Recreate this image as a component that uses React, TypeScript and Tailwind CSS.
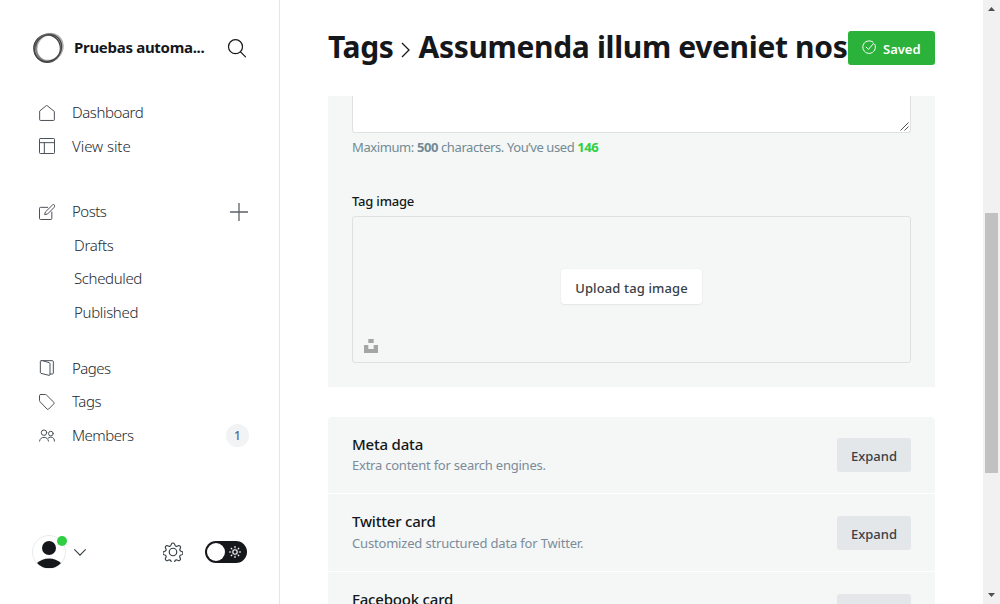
import type { ReactNode } from "react";

function Icon({ size = 16, box = 24, children }: { size?: number; box?: number; children: ReactNode }) {
  return (
    <svg width={size} height={size} viewBox={`0 0 ${box} ${box}`} fill="none" stroke="currentColor" strokeWidth="1.5" strokeLinecap="round" strokeLinejoin="round" className="shrink-0">
      {children}
    </svg>
  );
}

const home = <Icon><path d="M1 9.7V22a1.2 1.2 0 0 0 1.2 1.2h19.6A1.2 1.2 0 0 0 23 22V9.7L12 .8z" /></Icon>;
const layout = <Icon><rect x=".75" y=".75" width="22.5" height="22.5" rx="1.2" /><path d="M.75 7h22.5M8 7v16" /></Icon>;
const pencil = <Icon><path d="M13 5H2.200A1.500 1.500 0 0 0 .75 6.500v15.250a1.500 1.500 0 0 0 1.500 1.500h15.500a1.500 1.500 0 0 0 1.500-1.500V12M12.500 15l-4 1 1-4L20.200 1.500a2.100 2.100 0 0 1 3 3z" /></Icon>;
const pages = <Icon><path d="M5.500 1H20a1.500 1.500 0 0 1 1.500 1.500v17A1.500 1.500 0 0 1 20 21h-3.500M3.300 1h2.200l9.800 3c.7.200 1.200.800 1.200 1.500v16.300c0 .9-.7 1.500-1.500 1.200L3 20c-.7-.200-1-.800-1-1.500v-16C2 1.700 2.500 1 3.300 1z" /></Icon>;
const tag = <Icon><path d="M2.250.75h7.400a2 2 0 0 1 1.400.6l11.300 11.200a1.500 1.500 0 0 1 0 2.100l-8.100 8.100a1.500 1.500 0 0 1-2.100 0L1.350 11.300a2 2 0 0 1-.6-1.400V2.250a1.500 1.500 0 0 1 1.500-1.500z" /></Icon>;
const members = <Icon><path d="M11.600 8.500a4.100 4.100 0 1 1-8.200 0 4.100 4.100 0 0 1 8.200 0zM21.300 9.900a3.500 3.500 0 1 1-7 0 3.500 3.500 0 0 1 7 0zM.8 21.200a6.800 6.800 0 0 1 13.400 0M13.800 16.500a5.700 5.700 0 0 1 9.500 4.700" /></Icon>;

function NavItem({ icon, label, className, extra }: { icon: ReactNode; label: string; className: string; extra?: ReactNode }) {
  return (
    <a className="flex h-[33.5px] items-center">
      <span className="flex w-[33px] items-center pt-px text-[#4b5158]">{icon}</span>
      <span className={className}>{label}</span>
      {extra && <span className="ml-auto">{extra}</span>}
    </a>
  );
}

function Logo() {
  return (
    <svg width="32" height="32" viewBox="0 0 32 32" fill="none" className="shrink-0">
      <ellipse cx="16.800" cy="14.800" rx="12.600" ry="14" stroke="#b0b0b0" strokeWidth="2.400" transform="rotate(38 16 16)" />
      <ellipse cx="15.200" cy="16.500" rx="13.300" ry="13.700" stroke="#444" strokeWidth="1.500" />
      <ellipse cx="16.500" cy="15.500" rx="12.600" ry="13.700" stroke="#777" strokeWidth="1.300" transform="rotate(12 16 16)" />
      <ellipse cx="16" cy="16.200" rx="14.200" ry="12.600" stroke="#444" strokeWidth="1.100" transform="rotate(-42 16 16)" />
    </svg>
  );
}

function Sidebar() {
  return (
    <nav className="flex w-[280px] shrink-0 flex-col border-r border-[#e3e6e8] pt-8 text-[15px] font-light text-[#23292f]">
      <div className="flex h-8 items-center pr-[33px] pl-8">
        <Logo />
        <span className="-mt-0.5 ml-[10px] text-[15px] font-bold tracking-[-0.3px] whitespace-nowrap text-[#15171a]">Pruebas automa...</span>
        <svg width="19" height="19" viewBox="0 0 19 19" fill="none" stroke="#15171a" strokeWidth="1.200" strokeLinecap="round" className="ml-auto shrink-0"><circle cx="8.500" cy="7.700" r="7" /><path d="m13.500 12.800 5 5" /></svg>
      </div>
      <div className="mt-[31.5px] flex flex-col pr-[30px] pl-[39px]">
        <NavItem icon={home} label="Dashboard" className="tracking-[-0.42px]" />
        <NavItem icon={layout} label="View site" className="tracking-[-0.05px]" />
      </div>
      <div className="mt-8 flex flex-col pr-[31px] pl-[39px]">
        <NavItem icon={pencil} label="Posts" className="tracking-[-0.5px]" extra={<svg width="18" height="18" viewBox="0 0 18 18" stroke="#5c6167" strokeWidth="1.300" className="mt-px"><path d="M9 0v18M0 9h18" /></svg>} />
        <a className="flex h-[33.5px] items-center pl-[35px] tracking-[-0.25px]">Drafts</a>
        <a className="flex h-[33.5px] items-center pl-[35px] tracking-[-0.36px]">Scheduled</a>
        <a className="flex h-[33.5px] items-center pl-[35px] tracking-[-0.32px]">Published</a>
      </div>
      <div className="mt-[22.5px] flex flex-col pr-[30px] pl-[39px]">
        <NavItem icon={pages} label="Pages" className="tracking-[-0.52px]" />
        <NavItem icon={tag} label="Tags" className="tracking-[-0.4px]" />
        <NavItem icon={members} label="Members" className="tracking-[-0.5px]" extra={<span className="mt-px flex size-[23px] items-center justify-center rounded-full bg-[#f1f3f5] pt-px text-[12px] font-medium text-[#54698d]">1</span>} />
      </div>
      <div className="mt-auto mb-[34px] flex h-9 items-center pr-8 pl-8">
        <div className="relative size-[34px] rounded-full border border-[#e8eaec]">
          <svg width="32" height="32" viewBox="0 0 32 32" fill="#15171a"><circle cx="16" cy="12" r="7" /><path d="M4 27a16 13 0 0 1 24 0 16 16 0 0 1-24 0z" /></svg>
          <span className="absolute top-0 -right-[2px] size-[10px] rounded-full bg-[#30cf43]" />
        </div>
        <svg width="12" height="7" viewBox="0 0 12 7" fill="none" stroke="#343f44" strokeWidth="1.100" strokeLinecap="round" className="ml-2"><path d="m.6.6 5.400 5.500L11.400.6" /></svg>
        <span className="ml-[77px] text-[#343f44]">
          <svg width="20" height="20" viewBox="0 0 24 24" fill="none" stroke="currentColor" strokeWidth="1.400" strokeLinejoin="round"><circle cx="12" cy="12" r="4.500" /><path d="M13.900 2.500l.45 1.300a2 2 0 0 0 2.640 1.240l1.270-.56a2 2 0 0 1 2.640 2.640l-.57 1.270a2 2 0 0 0 1.200 2.700l1.070.4a2 2 0 0 1 0 3.740l-1.200.42a2 2 0 0 0-1.200 2.700l.57 1.270a2 2 0 0 1-2.640 2.640l-1.270-.57a2 2 0 0 0-2.640 1.250l-.45 1.300a2 2 0 0 1-3.740 0l-.45-1.300a2 2 0 0 0-2.640-1.250l-1.270.57a2 2 0 0 1-2.640-2.640l.57-1.270a2 2 0 0 0-1.200-2.700l-1.200-.42a2 2 0 0 1 0-3.740l1.200-.4a2 2 0 0 0 1.200-2.700l-.57-1.270a2 2 0 0 1 2.640-2.640l1.270.56a2 2 0 0 0 2.640-1.240l.45-1.300a2 2 0 0 1 3.740 0z" /></svg>
        </span>
        <span className="ml-[22px] flex h-[22px] w-[42px] items-center justify-between rounded-full bg-[#15171a] pr-[6px] pl-[2px]">
          <span className="size-[18px] rounded-full bg-white" />
          <svg width="12" height="12" viewBox="0 0 12 12" fill="none" stroke="#fff" strokeWidth="1.100"><circle cx="6" cy="6" r="2.200" /><path d="M6 0v2.200M6 9.800V12M0 6h2.200M9.800 6H12M1.800 1.800l1.500 1.500M8.700 8.700l1.500 1.500M10.200 1.800 8.700 3.300M3.300 8.700l-1.500 1.500" /></svg>
        </span>
      </div>
    </nav>
  );
}

function Card({ title, text, className }: { title: string; text: string; className: string }) {
  return (
    <div className="flex h-[76.6px] shrink-0 items-start justify-between bg-[#f4f7f6] px-6 pt-[17px]">
      <div>
        <h4 className="text-[15px] leading-[21.3px] font-medium tracking-[-0.2px] text-[#15171a]">{title}</h4>
        <p className={`text-[13px] leading-[20px] text-[#7c8b9a] ${className}`}>{text}</p>
      </div>
      <button className="mt-[4.7px] h-[34px] w-[74px] rounded-[3px] bg-[#e4e7ea] pt-[3px] text-[13px] font-medium text-[#394047]">Expand</button>
    </div>
  );
}

function Main() {
  return (
    <main className="flex min-w-0 flex-1 flex-col pr-12 pl-12">
      <header className="relative flex h-24 shrink-0 items-center overflow-hidden whitespace-nowrap text-[#15171a]">
        <h2 className="-mt-[2px] flex items-center text-[30px] leading-10 font-bold tracking-[-0.34px]">
          <span>Tags</span>
          <svg width="10" height="16" viewBox="0 0 10 16" fill="none" stroke="#15171a" strokeWidth="1.300" className="mr-[8px] ml-[7px] mt-[6px]"><path d="m1 1 7 7-7 7" /></svg>
          <span>Assumenda illum eveniet nostrum</span>
        </h2>
        <button className="absolute top-[31px] right-0 flex h-[34px] w-[87px] items-center rounded-[3px] bg-[#2ab23b] pt-[3px] pl-[14px] text-[13px] font-semibold text-white">
          <svg width="14" height="14" viewBox="0 0 14 14" fill="none" stroke="#fff" strokeWidth="1" strokeLinecap="round" className="mr-[7px] -mt-[5px]"><path d="M12.800 4.300A6.300 6.300 0 1 1 11 2.100M4.200 7.200l2.200 2.200 5.200-6" /></svg>
          Saved
        </button>
      </header>
      <div className="flex min-h-0 flex-1 flex-col overflow-hidden">
        <section className="flex h-[291px] shrink-0 flex-col bg-[#f4f7f6] px-6">
          <div className="flex h-[37px] items-end justify-end rounded-b-[3px] border-x border-b border-[#dde1e1] bg-white">
            <svg width="9" height="9" viewBox="0 0 9 9" stroke="#555" strokeWidth="1" className="mr-px mb-px"><path d="M.500 8.500l8-8M4.500 8.500l4-4" /></svg>
          </div>
          <p className="mt-1 text-[13px] leading-[21px] tracking-[-0.4px] text-[#738a94]">Maximum: <b>500</b> characters. You’ve used <b className="text-[#30cf43]">146</b></p>
          <label className="mt-[33px] text-[13px] leading-5 font-medium tracking-[-0.2px] text-[#15171a]">Tag image</label>
          <div className="relative mt-[5px] flex h-[147px] items-center justify-center rounded-[3px] border border-[#dde1e1]">
            <button className="-mt-[6px] h-[35px] w-[141px] rounded-[3px] bg-white pt-[4px] text-[13px] font-medium tracking-[0.12px] text-[#394047] shadow-[0_0_1px_rgba(0,0,0,.12),0_1px_2px_rgba(0,0,0,.06)]">Upload tag image</button>
            <svg width="14" height="14" viewBox="0 0 14 14" fill="#a3a6a6" className="absolute bottom-[9px] left-[11px]"><path d="M4.300 0h5.400v4H4.300zM0 6h4.300v4h5.400V6H14v8H0z" /></svg>
          </div>
        </section>
        <section className="mt-[29.7px] flex shrink-0 flex-col gap-px overflow-hidden rounded-[4px]">
          <Card title="Meta data" text="Extra content for search engines." className="tracking-[-0.23px]" />
          <Card title="Twitter card" text="Customized structured data for Twitter." className="tracking-[-0.18px]" />
          <Card title="Facebook card" text="Customize Open Graph data." className="tracking-[-0.2px]" />
        </section>
      </div>
    </main>
  );
}

export default function App() {
  return (
    <div className="flex h-[604px] w-[1000px] overflow-hidden bg-white font-['Noto_Sans',sans-serif]">
      <Sidebar />
      <Main />
      <div className="flex w-[17px] shrink-0 flex-col items-center bg-[#f1f1f1]">
        <svg width="7" height="4" viewBox="0 0 7 4" fill="#505050" className="mt-[7px]"><path d="M0 4 3.500 0 7 4z" /></svg>
        <div className="mt-[202px] h-[260px] w-[13px] bg-[#c1c1c1]" />
        <svg width="7" height="4" viewBox="0 0 7 4" fill="#505050" className="mt-auto mb-[7px]"><path d="M0 0h7L3.500 4z" /></svg>
      </div>
    </div>
  );
}
